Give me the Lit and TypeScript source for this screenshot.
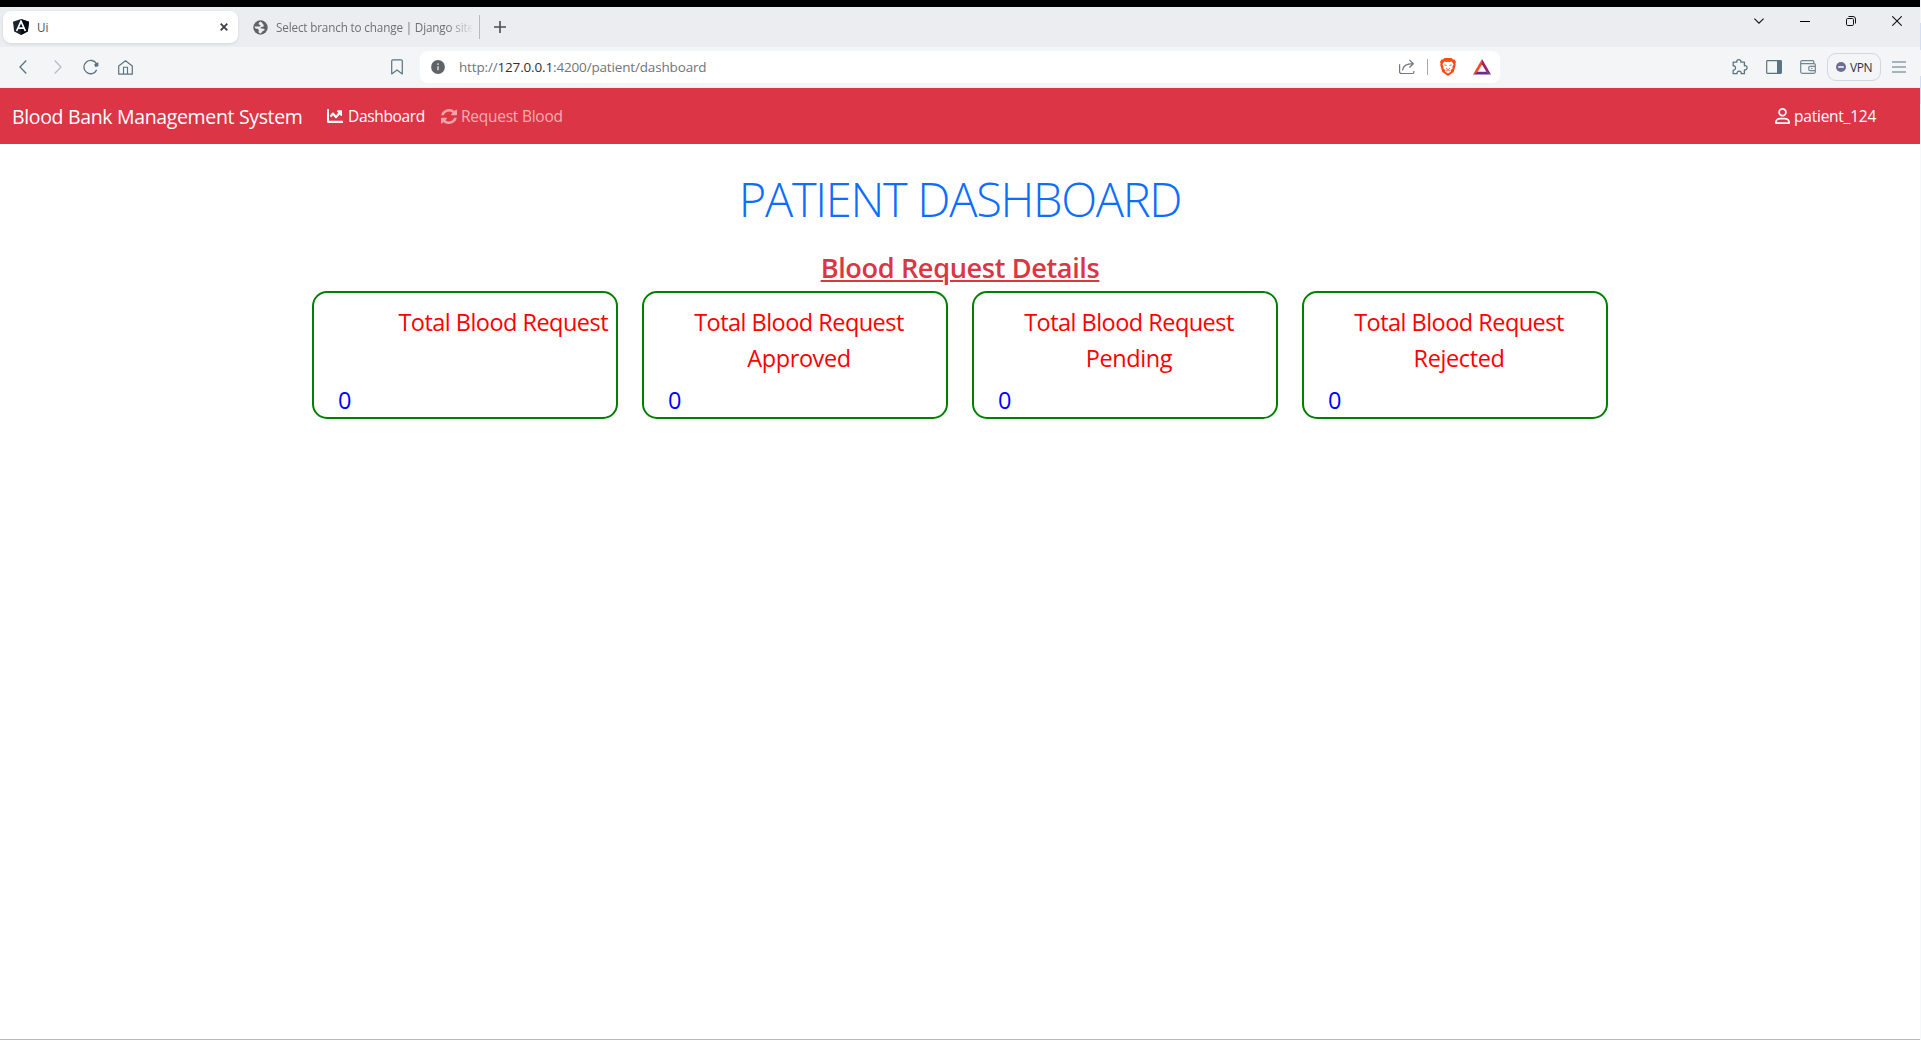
import { LitElement, html, css, svg } from "lit";
import { customElement, property } from "lit/decorators.js";

const FONT = css`"Open Sans", "Noto Sans", sans-serif`;

const icon = (w: number, h: number, body: unknown, box = `0 0 ${w} ${h}`) =>
  html`<svg width=${w} height=${h} viewBox=${box} preserveAspectRatio="none" fill="none">${body}</svg>`;

const angularIcon = icon(16, 16, svg`
  <path d="M8 0 16 2.8 14.8 12.4 8 16 1.2 12.4 0 2.8Z" fill="#1b242e"/>
  <path d="M8 0 16 2.8 14.8 12.4 8 16Z" fill="#070c12"/>
  <path d="M3.6 12 8 2.4 12.4 12M5.6 9.2h4.8" stroke="#fff" stroke-width="1.7"/>`);
const closeTab = icon(8, 8, svg`<path d="m.7.7 6.6 6.6M7.3.7.7 7.3" stroke="#3c4043" stroke-width="1.8"/>`);
const globe = icon(15, 15, svg`
  <circle cx="7.5" cy="7.5" r="7.2" fill="#5f6368"/>
  <path d="M7.800 1.600C6.500 2 5.400 3 5.600 4c.2.900 1.600.500 1.900 1.300.3.900-.800 1.300-2.200 1.200-1.300-.1-2.300.1-3.700.1 0 1.100.700 2.100 1.800 2.200 1.600.1 2.300.400 2.300 1.400s-.2 1.900.4 2.600c.4.500.9.700 1.500.700.900-.500.9-1.400 1.700-2.100 1-.7 2.500-.6 2.300-1.800-.2-1-1.900-1-3.100-1.100-.9 0-1.300-.7-.6-1.300.8-.6 2.300 0 2.800-.9.500-.9-.9-2.700-2.900-4.700Z" fill="#ecedf1"/>`);
const plus = icon(12, 12, svg`<path d="M6 0v12M0 6h12" stroke="#4a4e52" stroke-width="1.6"/>`);
const chevDown = icon(10, 6, svg`<path d="m.4.6 4.6 4.6L9.600.6" stroke="#111" stroke-width="1.1"/>`);
const minimize = icon(10, 10, svg`<path d="M0 5.500h10" stroke="#000"/>`);
const restore = icon(10, 10, svg`
  <rect x=".5" y="2.5" width="7" height="7" rx="1.2" stroke="#111"/>
  <path d="M2.500.5H7A2.500 2.500 0 0 1 9.500 3v4.500" stroke="#111"/>`);
const closeWin = icon(10, 10, svg`<path d="m.3.300 9.400 9.400M9.700.300.300 9.700" stroke="#111" stroke-width="1.1"/>`);

const back = icon(8, 14, svg`<path d="M7.300.5 1 7l6.300 6.500" stroke="#5b7480" stroke-width="1.300"/>`);
const forward = icon(8, 14, svg`<path d="M.700.5 7 7l-6.300 6.500" stroke="#b2c0c6" stroke-width="1.300"/>`);
const reload = icon(16, 16, svg`
  <path d="M13.600 5A6.700 6.700 0 1 0 13.700 10.900" stroke="#5b7480" stroke-width="1.300"/>
  <path d="M15.400 3.600v3.700l-3 .7-1.300-2.200 2.300-2Z" fill="#5b7480"/>`);
const home = icon(15, 15, svg`
  <path d="M.7 5.900 7.500.8l6.800 5.100v8.300H.7Z" stroke="#5b7480" stroke-width="1.200" stroke-linejoin="round"/>
  <path d="M5.500 14V7.300h4V14" stroke="#5b7480" stroke-width="1.100"/>`);
const bookmark = icon(12, 16, svg`<path d="M.7 2A1.200 1.200 0 0 1 1.900.8h8.200A1.200 1.200 0 0 1 11.300 2v12.900L6 11.100.7 14.900Z" stroke="#5b7480" stroke-width="1.200" stroke-linejoin="round"/>`);
const info = icon(14, 14, svg`
  <circle cx="7" cy="7" r="6.900" fill="#5f6368"/>
  <path d="M7 6.200v4" stroke="#dfe1e3" stroke-width="1.400"/><circle cx="7" cy="4.100" r=".9" fill="#dfe1e3"/>`);
const share = icon(16, 16, svg`
  <path d="M.6 5.200v7.600A1.700 1.700 0 0 0 2.300 14.500h11.100a1.500 1.500 0 0 0 1.500-1.500v-1" stroke="#74787c" stroke-width="1.200"/>
  <path d="M3.500 11.400C4 7 7.500 4.700 14 4.700M10.400.9l3.900 3.800-3.900 3.800" stroke="#74787c" stroke-width="1.300"/>`);
const brave = icon(16, 18, svg`
  <path d="M4.500 0h7l1.500 1.600 1.600-.2L16 4l-.6 1.500.3 1.500-2 7L8 18l-5.700-4-2-7 .3-1.500L0 4l1.400-2.600 1.600.2Z" fill="#fb4a12"/>
  <path d="m4.300 3.600 2 .4L8 3.700l1.700.3 2-.4 1.900 2.700-1.200 2.800.2 1.500-2.100 1.600.6 1.300L8 15.600l-3.100-2.100.6-1.300-2.100-1.600.2-1.500-1.200-2.800Z" fill="#fff"/>
  <path d="m4.100 6.800 2.500.7M11.900 6.800l-2.500.7M5.900 10.300 8 11.500l2.100-1.200M6 13l2-1.100 2 1.100" stroke="#fb4a12" stroke-width=".8"/>`);
const bat = icon(18, 16, svg`
  <path d="M9 0 0 15.500l4.500-2.400L9 5.500Z" fill="#ff4724"/>
  <path d="m9 0 9 15.500-4.500-2.400L9 5.500Z" fill="#9e1f63"/>
  <path d="M0 15.500h18l-4.500-2.800h-9Z" fill="#662d91"/>`);
const puzzle = icon(16, 16, svg`
  <path d="M1.200 3.200h3.600c-.4-1.500.6-2.500 2-2.500s2.400 1 2 2.500h3.600v3.600c1.500-.4 2.700.500 2.700 2s-1.200 2.400-2.700 2v3.900H9.200c.3-1.500-.6-2.500-2-2.500s-2.400 1-2.100 2.500H1.200v-3.600c1.400.2 2.300-.8 2.300-2.200s-.9-2.300-2.300-2.100Z" stroke="#5b7480" stroke-width="1.300" stroke-linejoin="round"/>`);
const sidebar = icon(16, 14, svg`
  <rect x=".7" y=".7" width="14.600" height="12.600" rx=".8" stroke="#5b7480" stroke-width="1.200"/>
  <path d="M11 .7h4.600v12.600H11Z" fill="#5b7480"/>`);
const wallet = icon(16, 14, svg`
  <path d="M13.800 3.700V1.700a1 1 0 0 0-1-1H2a1.300 1.300 0 0 0-1.300 1.300v9.800A1.500 1.500 0 0 0 2.200 13.300h11.600a1.500 1.500 0 0 0 1.500-1.500V5a1.300 1.300 0 0 0-1.300-1.300H2A1.300 1.300 0 0 1 .7 2.400" stroke="#728790" stroke-width="1.200"/>
  <path d="M15.300 6.400H10a1.200 1.200 0 0 0-1.200 1.200v1.800A1.200 1.200 0 0 0 10 10.600h5.300M11 8.500h1.500" stroke="#728790" stroke-width="1.200"/>`);
const vpnDot = icon(10, 10, svg`<circle cx="5" cy="5" r="5" fill="#6b6f94"/><path d="M2.200 5h5.600" stroke="#fff" stroke-width="1.500"/>`);
const menu = icon(14, 12, svg`<path d="M0 1h14M0 6h14M0 11h14" stroke="#5b7480" stroke-width="1.200"/>`);

const chart = icon(16, 14, svg`<path fill="#fff" d="M496 384H64V80c0-8.840-7.160-16-16-16H16C7.160 64 0 71.160 0 80v336c0 17.670 14.330 32 32 32h464c8.840 0 16-7.160 16-16v-32c0-8.840-7.160-16-16-16zM464 96H345.940c-21.380 0-32.090 25.850-16.970 40.970l32.400 32.400L288 242.750l-73.370-73.370c-12.500-12.500-32.760-12.500-45.250 0l-68.690 68.690c-6.250 6.250-6.250 16.380 0 22.630l22.620 22.620c6.250 6.250 16.380 6.250 22.630 0L192 237.250l73.370 73.370c12.500 12.500 32.760 12.500 45.250 0l96-96 32.400 32.400c15.120 15.120 40.970 4.410 40.970-16.970V112c.01-8.840-7.150-16-15.990-16z"/>`, "0 64 512 384");
const sync = icon(16, 15, svg`<path fill="#f0a3ab" d="M1511 928q0 5-1 7-64 268-268 434.500t-478 166.500q-146 0-282.500-55t-243.500-157l-129 129q-19 19-45 19t-45-19-19-45v-448q0-26 19-45t45-19h448q26 0 45 19t19 45-19 45l-137 137q71 66 161 102t187 36q134 0 250-65t186-179q11-17 53-117 8-23 30-23h192q13 0 22.500 9.500t9.500 22.500zm25-800v448q0 26-19 45t-45 19h-448q-26 0-45-19t-19-45 19-45l138-138q-148-137-349-137-134 0-250 65t-186 179q-11 17-53 117-8 23-30 23h-199q-13 0-22.500-9.500t-9.500-22.500v-7q65-268 270-434.500t480-166.500q146 0 284 55.500t245 156.500l130-129q19-19 45-19t45 19 19 45z"/>`, "0 0 1536 1536");
const user = icon(15, 16, svg`
  <circle cx="7.500" cy="4.300" r="3.400" stroke="#fff" stroke-width="1.700"/>
  <path d="M.9 15.100v-.6c0-2.300 1.900-3.900 4.200-3.900h4.800c2.300 0 4.200 1.600 4.200 3.900v.6Z" stroke="#fff" stroke-width="1.700" stroke-linejoin="round"/>`);

@customElement("browser-chrome")
class BrowserChrome extends LitElement {
  static styles = css`
    :host { display: block; font-family: ${FONT}; }
    svg { display: block; flex: none; }
    .tabs { height: 40px; box-sizing: border-box; background: #ecedf1; display: flex; padding: 4px 18px 4px 3px; }
    .tab { width: 235px; height: 32px; box-sizing: border-box; padding: 0 10px; display: flex; align-items: center;
      background: #fff; border-radius: 8px; box-shadow: 0 1px 3px rgba(0,0,0,.1); font-size: 11.700px; color: #4b4f54; }
    .tab span { margin-left: 8px; flex: 1; line-height: 16px; }
    .idle { width: 241px; height: 32px; box-sizing: border-box; padding-left: 15px; display: flex; align-items: center; gap: 8px; }
    .idle span { width: 196px; overflow: hidden; white-space: nowrap; font-size: 11.700px; letter-spacing: -.15px; line-height: 16px;
      color: #6d7074; -webkit-mask-image: linear-gradient(90deg, #000 87%, transparent 101%); }
    .sep { width: 1px; height: 24px; margin: 4px 14px 0 0; background: #b5b8bc; }
    .new { margin-top: 10px; }
    .window { margin-left: auto; display: flex; gap: 36px; align-items: center; height: 20px; }
    .bar { height: 41px; box-sizing: border-box; border-bottom: 1px solid #eceff1; background: #f3f5f7; display: flex; align-items: center; padding: 0 0 0 19px; }
    .fwd { margin-left: 27px; }
    .rel { margin-left: 21px; }
    .home { margin-left: 19px; }
    .mark { margin-left: 258px; }
    .url { margin-left: 17px; width: 1080px; height: 32px; box-sizing: border-box; background: #fff; border-radius: 8px;
      display: flex; align-items: center; padding: 0 9px 0 11px; }
    .url span { margin-left: 14px; flex: 1; font-size: 13.500px; letter-spacing: -.16px; color: #70757a; white-space: nowrap; }
    .url b { font-weight: 400; color: #303236; }
    .vr { width: 1px; height: 16px; background: #a5a9ad; margin: 0 12px; }
    .tri { margin-left: 17px; }
    .tools { margin-left: 232px; display: flex; align-items: center; gap: 18px; }
    .vpn { margin: 0 -7px; width: 54px; height: 28px; box-sizing: border-box; border: 1px solid #cfd8dd; border-radius: 9px;
      display: flex; align-items: center; justify-content: center; gap: 4px; font-size: 12px; letter-spacing: -.5px; color: #2f3237; }
  `;
  render() {
    return html`
      <div class="tabs">
        <div class="tab">${angularIcon}<span>Ui</span>${closeTab}</div>
        <div class="idle">${globe}<span>Select branch to change | Django site</span></div>
        <div class="sep"></div><div class="new">${plus}</div>
        <div class="window">${chevDown}${minimize}${restore}${closeWin}</div>
      </div>
      <div class="bar">
        ${back}<div class="fwd">${forward}</div><div class="rel">${reload}</div><div class="home">${home}</div>
        <div class="mark">${bookmark}</div>
        <div class="url">${info}<span>http://<b>127.0.0.1</b>:4200/patient/dashboard</span>
          ${share}<div class="vr"></div>${brave}<div class="tri">${bat}</div></div>
        <div class="tools">${puzzle}${sidebar}${wallet}<div class="vpn">${vpnDot}VPN</div>${menu}</div>
      </div>`;
  }
}

@customElement("request-card")
class RequestCard extends LitElement {
  @property() label = "";
  @property() status = "";
  @property() value = "0";
  static styles = css`
    :host { display: block; width: 306px; height: 128px; box-sizing: border-box; border: 2px solid green; border-radius: 15px;
      font-family: ${FONT}; font-size: 23.500px; line-height: 36px; }
    .head { height: 72px; padding: 11px 0 0 8px; text-align: center; color: red; letter-spacing: -.53px; }
    .head.solo { text-align: right; padding: 11px 8px 0 0; }
    .status { letter-spacing: -.4px; }
    .value { padding: 6px 0 0 24px; color: blue; line-height: 36px; }
  `;
  render() {
    return html`<div class="head ${this.status ? "" : "solo"}"><div>${this.label}</div><div class="status">${this.status}</div></div>
      <div class="value">${this.value}</div>`;
  }
}

@customElement("app-root")
class AppRoot extends LitElement {
  static styles = css`
    :host { display: flex; width: 1921px; height: 1040px; background: #fff; font-family: ${FONT}; overflow: hidden; }
    svg { display: block; flex: none; }
    .screen { width: 1920px; height: 1040px; box-sizing: border-box; border-top: 7px solid #000; border-bottom: 1px solid #b9b9b9; }
    .edge { width: 1px; background: linear-gradient(#f4f6fa 23px, #d3def5 23px 50px, #f4f6fa 50px 76px, #cddcf7 76px 104px, #f7f8fa 104px); }
    .nav { height: 56px; background: #dc3545; color: #fff; display: flex; align-items: center; padding: 0 44px 0 12px; font-size: 15.500px; white-space: nowrap; }
    .brand { width: 315px; font-size: 19.500px; letter-spacing: -.34px; }
    .link { display: flex; align-items: center; gap: 4px; line-height: 24px; }
    .dash { width: 114px; gap: 5px; letter-spacing: -.34px; }
    .req { color: #f1aeb5; letter-spacing: -.25px; }
    .user { margin-left: auto; letter-spacing: -.25px; }
    .main { display: flex; flex-direction: column; align-items: center; }
    .title { margin: 26px 0 0; font-size: 47px; line-height: 58px; font-weight: 300; letter-spacing: -1.300px; color: #0d6efd; }
    .sub { margin: 23px 0 0; font-size: 27.200px; line-height: 34px; font-weight: 600; letter-spacing: -.4px; color: #dc3545;
      text-decoration: underline; text-decoration-thickness: 2px; text-underline-offset: 2px; }
    .cards { margin-top: 6px; display: flex; gap: 24px; }
  `;
  render() {
    return html`
      <div class="screen">
        <browser-chrome></browser-chrome>
        <div class="nav">
          <div class="brand">Blood Bank Management System</div>
          <div class="link dash">${chart}<span>Dashboard</span></div>
          <div class="link req">${sync}<span>Request Blood</span></div>
          <div class="link user">${user}<span>patient_124</span></div>
        </div>
        <div class="main">
          <h1 class="title">PATIENT DASHBOARD</h1>
          <h3 class="sub">Blood Request Details</h3>
          <div class="cards">
            <request-card label="Total Blood Request"></request-card>
            <request-card label="Total Blood Request" status="Approved"></request-card>
            <request-card label="Total Blood Request" status="Pending"></request-card>
            <request-card label="Total Blood Request" status="Rejected"></request-card>
          </div>
        </div>
      </div>
      <div class="edge"></div>`;
  }
}
